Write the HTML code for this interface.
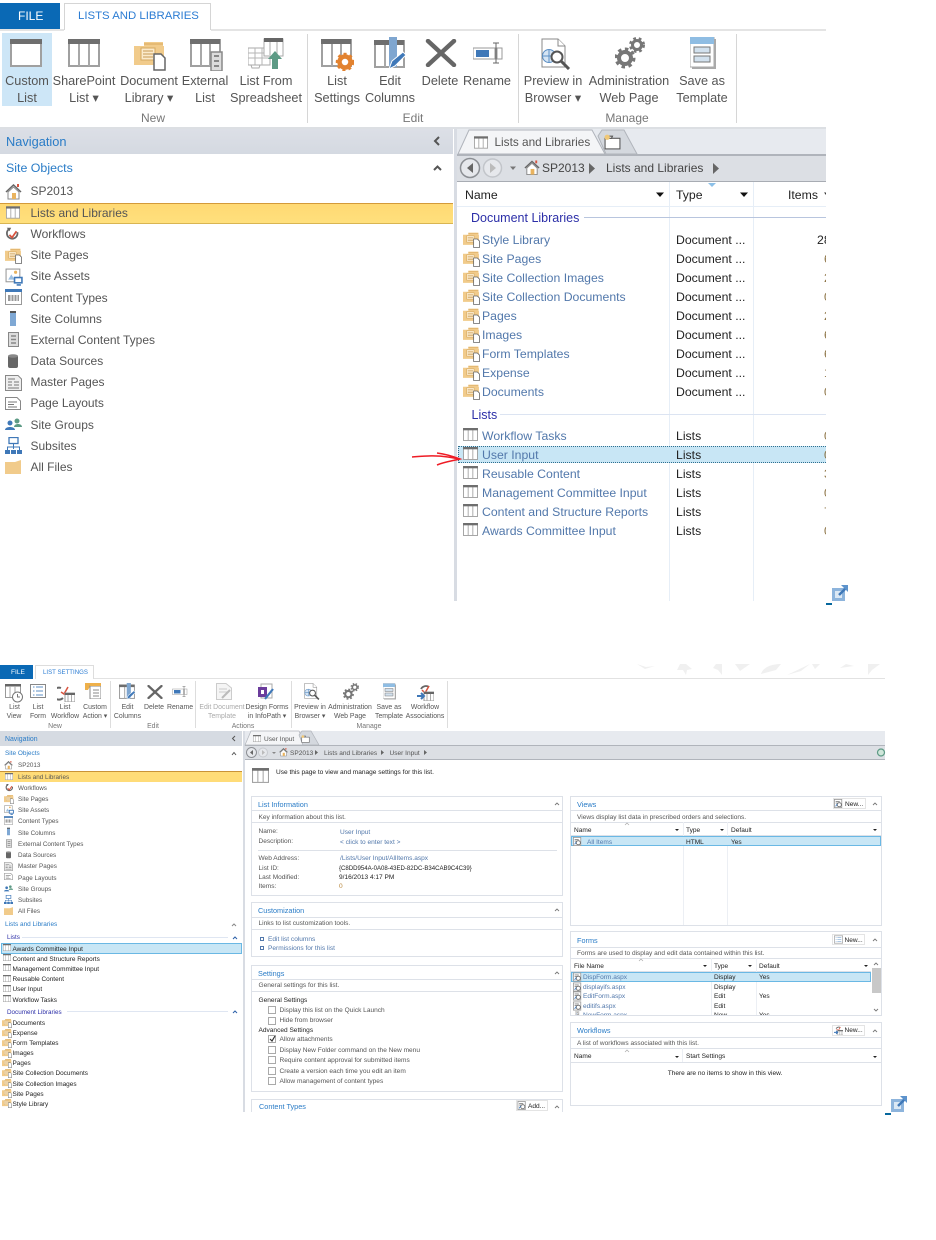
<!DOCTYPE html>
<html><head><meta charset="utf-8"><style>
html,body{margin:0;padding:0;background:#fff;width:936px;height:1240px;overflow:hidden}
body{position:relative;font-family:"Liberation Sans",sans-serif}
div,span.a{position:absolute}
.t{position:absolute;white-space:nowrap;line-height:16px;margin-top:-8px;color:#555}
.c{transform:translateX(-50%)}
#A .t{font-size:12px}
#A .lk,#A .dk{font-size:12.25px}
#B .t{font-size:6.55px;margin-top:-7px}
#B .bl{font-size:7.3px}
#B .rb .t{font-size:6.9px}
#B .nv .t{font-size:6.3px}
#B .nv .dk{font-size:6.45px}
#A .r{font-size:12.7px;color:#555}
.bl{color:#2a7cc7!important}
.lk{color:#5278ab!important}
.dk{color:#222!important}
.g{color:#777!important}
.hd{color:#2c2fa8!important}
.lt{color:#aaa!important}
.p{background:#fff;border:1px solid #dde1e8;box-sizing:border-box}
.l{background:#dde1e8;height:1px}
svg{position:absolute;left:0;top:0}
#A,#B{left:0;top:0;width:936px;height:1240px}
#B{filter:blur(.35px)}
#A{filter:blur(.3px)}
.rb,.nv{left:0;top:0}
.clip{overflow:hidden}
.cb{width:6px;height:6px;border:1px solid #aaa;background:#fff}
</style></head><body>
<svg width="0" height="0" style="position:absolute"><defs>
<symbol id="tb0" viewBox="0 0 32 28"><rect x="1" y="1" width="30" height="26" fill="#fff" stroke="#a0a0a0" stroke-width="2"/><rect width="32" height="5" fill="#6e6e6e"/></symbol>
<symbol id="tb" viewBox="0 0 32 28"><rect x="1" y="1" width="30" height="26" fill="#fff" stroke="#a0a0a0" stroke-width="2"/><path d="M11 4V27M21 4V27" stroke="#a8a8a8" stroke-width="2"/><rect width="32" height="5" fill="#6e6e6e"/></symbol>
<symbol id="lib" viewBox="0 0 32 32"><path d="M0 7H10V3H29V7H30V26H0Z" fill="#f1cb8b"/><path d="M10 5H29" stroke="#d9a85c"/><rect x="7" y="9" width="14" height="12" fill="#fbeacb" stroke="#d4a860"/><path d="M9 12H19M9 15H19M9 18H19" stroke="#c79a55"/><path d="M20 15H27L31 19V31H20Z" fill="#fff" stroke="#666" stroke-width="1.5"/></symbol>
<symbol id="ext" viewBox="0 0 33 32"><rect x="1" y="1" width="29" height="26" fill="#fff" stroke="#a0a0a0" stroke-width="2"/><path d="M11 4V27M20 4V27" stroke="#a8a8a8" stroke-width="2"/><rect width="30" height="5" fill="#6e6e6e"/><rect x="21" y="13" width="11" height="19" fill="#ddd" stroke="#888" stroke-width="1.5"/><path d="M24 17H29M24 22H29M24 27H29" stroke="#888" stroke-width="2"/></symbol>
<symbol id="ss" viewBox="0 0 36 32"><path d="M0 10H22V27H0Z" fill="#fff" stroke="#aaa"/><path d="M0 15H22M0 20H22M7 10V27M14 10V27" stroke="#b5b5b5"/><path d="M3 27H12L11 30H4Z" fill="#fff" stroke="#aaa"/><rect x="16" y="1" width="19" height="17" fill="#fff" stroke="#aaa"/><rect x="16" width="19" height="4" fill="#666"/><path d="M22 4V17M29 4V17" stroke="#aaa"/><path d="M24 31V21H20L27 13L34 21H30V31Z" fill="#5d9a85"/></symbol>
<symbol id="lset" viewBox="0 0 33 32"><rect x="1" y="1" width="29" height="26" fill="#fff" stroke="#a0a0a0" stroke-width="2"/><path d="M11 4V27M20 4V27" stroke="#a8a8a8" stroke-width="2"/><rect width="30" height="5" fill="#6e6e6e"/><circle cx="24" cy="23" r="5.5" fill="#fff" stroke="#e2822f" stroke-width="4.5"/><circle cx="24" cy="23" r="8" fill="none" stroke="#e2822f" stroke-width="2.5" stroke-dasharray="3 3"/></symbol>
<symbol id="ecol" viewBox="0 0 33 33"><rect x="1" y="4" width="29" height="26" fill="#fff" stroke="#a0a0a0" stroke-width="2"/><path d="M11 7V30" stroke="#a8a8a8" stroke-width="2"/><rect y="3" width="30" height="5" fill="#6e6e6e"/><rect x="15" width="8" height="30" fill="#7fa6d0"/><path d="M15 32L18 24L29 15L32 18L21 29Z" fill="#3f78b8" stroke="#fff"/></symbol>
<symbol id="x" viewBox="0 0 32 28"><path d="M3 2L29 26M29 2L3 26" stroke="#666" stroke-width="4.5" stroke-linecap="round"/></symbol>
<symbol id="ren" viewBox="0 0 30 22"><rect x="0" y="6" width="22" height="11" fill="#fff" stroke="#999"/><rect x="3" y="8" width="13" height="7" fill="#3f78b8"/><rect x="24" y="6" width="5" height="11" fill="#fff" stroke="#999"/><path d="M20 1H26M20 21H26M23 1V21" stroke="#666" fill="none"/></symbol>
<symbol id="prev" viewBox="0 0 30 32"><path d="M1 1H17L24 8V29H1Z" fill="#fff" stroke="#888"/><path d="M17 1V8H24" fill="#fff" stroke="#888"/><circle cx="8" cy="18" r="6.5" fill="#d5e4f3" stroke="#5c8fc4"/><path d="M2 18H14M8 12V24" stroke="#5c8fc4"/><circle cx="16" cy="19" r="5.5" fill="#fff" stroke="#555" stroke-width="2"/><path d="M20 23L28 31" stroke="#555" stroke-width="3"/></symbol>
<symbol id="adm" viewBox="0 0 30 32"><circle cx="10" cy="21" r="6" fill="#fff" stroke="#777" stroke-width="4"/><circle cx="10" cy="21" r="9" fill="none" stroke="#777" stroke-width="3" stroke-dasharray="3.5 3.5"/><circle cx="22" cy="8" r="4.5" fill="#fff" stroke="#777" stroke-width="3"/><circle cx="22" cy="8" r="6.8" fill="none" stroke="#777" stroke-width="2.4" stroke-dasharray="2.8 2.8"/></symbol>
<symbol id="tmpl" viewBox="0 0 26 32"><rect x="2" y="2" width="24" height="30" fill="#aaa"/><rect x="0" y="0" width="24" height="30" fill="#fff" stroke="#aaa"/><rect width="24" height="7" fill="#8fbde3"/><rect x="4" y="10" width="16" height="6" fill="#d2e1ee" stroke="#777"/><rect x="4" y="19" width="16" height="6" fill="#d2e1ee" stroke="#777"/></symbol>
<symbol id="home" viewBox="0 0 17 16"><path d="M1 8L8.500 1L16 8" fill="none" stroke="#666" stroke-width="1.500"/><path d="M3 8V15H14V8L8.500 3Z" fill="#fff" stroke="#888"/><rect x="7" y="9" width="4" height="6" fill="#e9b35f"/><rect x="12" y="0" width="2" height="3" fill="#d9543f"/></symbol>
<symbol id="wf" viewBox="0 0 17 17"><path d="M4 4A6 6 0 1 0 14 7" fill="none" stroke="#666" stroke-width="2"/><path d="M2 2L7 2L5 6Z" fill="#666"/><path d="M5 10L8 13L13 6" fill="none" stroke="#d9543f" stroke-width="2"/></symbol>
<symbol id="ast" viewBox="0 0 17 17"><rect x="1" y="1" width="13" height="12" fill="#fff" stroke="#999"/><path d="M3 11L6 6L9 11Z" fill="#9dbfe0"/><circle cx="10" cy="4" r="1.500" fill="#e9b35f"/><rect x="9" y="9" width="7" height="5" fill="#fff" stroke="#3f78b8" stroke-width="1.500"/><path d="M11 16H15" stroke="#3f78b8" stroke-width="1.500"/></symbol>
<symbol id="ct" viewBox="0 0 17 16"><rect x=".5" y=".5" width="16" height="15" fill="#fff" stroke="#999"/><rect width="17" height="3" fill="#3f78b8"/><rect x="3" y="6" width="11" height="6" fill="#999"/><path d="M6 6V12M9 6V12M12 6V12" stroke="#fff"/></symbol>
<symbol id="col" viewBox="0 0 6 15"><rect width="6" height="15" fill="#7fa8d4"/><rect width="6" height="2" fill="#555"/></symbol>
<symbol id="ect" viewBox="0 0 11 15"><rect x=".5" y=".5" width="10" height="14" fill="#ddd" stroke="#888"/><path d="M3 4H8M3 7.500H8M3 11H8" stroke="#888" stroke-width="1.400"/></symbol>
<symbol id="ds" viewBox="0 0 10 15"><rect y="1" width="10" height="13" rx="2" fill="#666"/><ellipse cx="5" cy="2" rx="5" ry="1.800" fill="#888"/></symbol>
<symbol id="mp" viewBox="0 0 17 16"><path d="M.5.500H13L16.500 4V15.500H.5Z" fill="#eee" stroke="#888"/><path d="M3 4H10M3 7H7M3 10H7M9 7H14M9 10H14M3 13H14" stroke="#777"/></symbol>
<symbol id="pl" viewBox="0 0 16 13"><path d="M.5.500H12L15.500 4V12.500H.5Z" fill="#fff" stroke="#888"/><path d="M3 5H12M3 7.500H9M3 10H12" stroke="#777"/></symbol>
<symbol id="grp" viewBox="0 0 17 13"><circle cx="5" cy="5" r="2.500" fill="#3f78b8"/><path d="M0 12C0 8 10 8 10 12Z" fill="#3f78b8"/><circle cx="12" cy="3" r="2.500" fill="#5d9a85"/><path d="M9 9C9 5 17 5 17 9Z" fill="#5d9a85"/></symbol>
<symbol id="sub" viewBox="0 0 17 17"><rect x="4" y=".5" width="9" height="6" fill="#fff" stroke="#3f78b8" stroke-width="1.300"/><path d="M8.500 7V12M2.500 13V10H14.500V13" fill="none" stroke="#3f78b8"/><rect y="13" width="5" height="4" fill="#3f78b8"/><rect x="6" y="13" width="5" height="4" fill="#3f78b8"/><rect x="12" y="13" width="5" height="4" fill="#3f78b8"/></symbol>
<symbol id="fol" viewBox="0 0 16 14"><path d="M0 2H10L16 0V14H0Z" fill="#f1cb8b"/></symbol>
<symbol id="lv" viewBox="0 0 18 19"><rect x=".5" y=".5" width="15" height="13" fill="#fff" stroke="#999"/><rect width="16" height="2.500" fill="#666"/><path d="M5 2V13M10 2V13" stroke="#aaa"/><circle cx="12.500" cy="13" r="5" fill="#fff" stroke="#777"/><path d="M12.500 10V13H15" stroke="#777" fill="none"/></symbol>
<symbol id="lf" viewBox="0 0 16 14"><rect x=".5" y=".5" width="15" height="13" fill="#fff" stroke="#888"/><path d="M3 3H4.500M6 3H13M3 7H4.500M6 7H13M3 11H4.500M6 11H13" stroke="#5c8fc4"/></symbol>
<symbol id="lw" viewBox="0 0 18 18"><path d="M4 4A6 6 0 1 0 6 14" fill="none" stroke="#666" stroke-width="2"/><path d="M4 8L7 10L11 3" fill="none" stroke="#d9543f" stroke-width="1.500"/><rect x="8" y="9" width="10" height="9" fill="#fff" stroke="#999"/><rect x="8" y="9" width="10" height="2" fill="#666"/><path d="M11 11V18M14.500 11V18" stroke="#aaa"/></symbol>
<symbol id="ca" viewBox="0 0 16 16"><path d="M0 0H7L3 7H0Z" fill="#eeb04a"/><rect x="5" y="3" width="11" height="13" fill="#fff" stroke="#888"/><rect x="5" width="11" height="3" fill="#eeb04a"/><path d="M8 7H14M8 10H14M8 13H14" stroke="#888"/></symbol>
<symbol id="dt" viewBox="0 0 16 17"><path d="M.5.500H10L15.500 5V16.500H.5Z" fill="#f5f5f5" stroke="#ccc"/><path d="M3 6H11M3 9H11" stroke="#ccc"/><path d="M6 15L14 7" stroke="#bbb" stroke-width="2"/></symbol>
<symbol id="dfi" viewBox="0 0 17 17"><rect x="3" y="1" width="11" height="14" fill="#fff" stroke="#aaa"/><rect y="4" width="9" height="10" fill="#6b3c9c"/><rect x="3" y="7" width="3" height="4" fill="#fff"/><path d="M7 16L15 6" stroke="#3f78b8" stroke-width="2.200"/></symbol>
<symbol id="wa" viewBox="0 0 17 17"><path d="M4 5A5.500 5.500 0 0 1 12 3" fill="none" stroke="#666" stroke-width="1.800"/><path d="M5 6L8 9L12 2" fill="none" stroke="#d9543f" stroke-width="1.500"/><rect x="7" y="8" width="10" height="9" fill="#fff" stroke="#999"/><rect x="7" y="8" width="10" height="2" fill="#666"/><path d="M10 10V17M13.500 10V17" stroke="#aaa"/><path d="M0 12H6M4 9L7 12L4 15" fill="none" stroke="#3f78b8" stroke-width="2"/></symbol>
<symbol id="ftab" viewBox="0 0 16 15"><rect x="1" y="4" width="14" height="10" fill="#fff" stroke="#555"/><path d="M1 4H7L8 2H2Z" fill="#fff" stroke="#555"/><circle cx="3" cy="3" r="2.500" fill="#f0c878"/></symbol>
<symbol id="pop" viewBox="0 0 16 16"><rect y="3" width="13" height="13" fill="#8db4dc"/><rect x="3" y="6" width="7" height="7" fill="#dbe8f4"/><path d="M7 10L14 3" stroke="#3f78b8" stroke-width="2.500"/><path d="M9 0H16V7Z" fill="#5d93cc"/></symbol>
<symbol id="frm" viewBox="0 0 11 11"><rect x=".5" y=".5" width="9" height="10" fill="#fff" stroke="#999"/><path d="M2 3H7M2 5H5" stroke="#888"/><circle cx="6.500" cy="7" r="2.500" fill="none" stroke="#666"/><path d="M2 9L4 6" stroke="#3f78b8"/></symbol>
</defs></svg>

<!-- ================= TOP SCREENSHOT ================= -->
<div id="A">
<div style="left:0;top:3px;width:60px;height:26px;background:#0a69b5"></div>
<div class="t" style="left:18px;top:16px;color:#fff;font-size:12px">FILE</div>
<div style="left:64px;top:3px;width:147px;height:27px;box-sizing:border-box;border:1px solid #d5d5d5;border-bottom:0;background:#fff"></div>
<div class="t" style="left:78px;top:16px;color:#2b7cd3;font-size:11.4px">LISTS AND LIBRARIES</div>
<div style="left:0;top:29px;width:64px;height:2px;background:#e4e4e4"></div>
<div style="left:211px;top:29px;width:615px;height:2px;background:#e4e4e4"></div>
<div style="left:2px;top:33px;width:50px;height:73px;background:#cde6f7"></div>
<div style="left:307px;top:34px;width:1px;height:89px;background:#d6d6d6"></div>
<div style="left:518px;top:34px;width:1px;height:89px;background:#d6d6d6"></div>
<div style="left:736px;top:34px;width:1px;height:89px;background:#d6d6d6"></div>
<div style="left:0;top:127px;width:826px;height:2px;background:#dcdfe3"></div>

<div class="t c r" style="left:27px;top:81px">Custom</div><div class="t c r" style="left:27px;top:98px">List</div>
<div class="t c r" style="left:84px;top:81px">SharePoint</div><div class="t c r" style="left:84px;top:98px">List ▾</div>
<div class="t c r" style="left:149px;top:81px">Document</div><div class="t c r" style="left:149px;top:98px">Library ▾</div>
<div class="t c r" style="left:205px;top:81px">External</div><div class="t c r" style="left:205px;top:98px">List</div>
<div class="t c r" style="left:266px;top:81px">List From</div><div class="t c r" style="left:266px;top:98px">Spreadsheet</div>
<div class="t c g" style="left:153px;top:118px">New</div>
<div class="t c r" style="left:337px;top:81px">List</div><div class="t c r" style="left:337px;top:98px">Settings</div>
<div class="t c r" style="left:390px;top:81px">Edit</div><div class="t c r" style="left:390px;top:98px">Columns</div>
<div class="t c r" style="left:440px;top:81px">Delete</div>
<div class="t c r" style="left:487px;top:81px">Rename</div>
<div class="t c g" style="left:413px;top:118px">Edit</div>
<div class="t c r" style="left:553px;top:81px">Preview in</div><div class="t c r" style="left:553px;top:98px">Browser ▾</div>
<div class="t c r" style="left:629px;top:81px">Administration</div><div class="t c r" style="left:629px;top:98px">Web Page</div>
<div class="t c r" style="left:702px;top:81px">Save as</div><div class="t c r" style="left:702px;top:98px">Template</div>
<div class="t c g" style="left:627px;top:118px">Manage</div>

<!-- nav -->
<div style="left:0;top:129px;width:453px;height:25px;background:linear-gradient(#dcdfe6,#d4d9e1)"></div>
<div class="t" style="left:6px;top:141.500px;color:#2a7cc7;font-size:12.8px">Navigation</div>
<div class="t" style="left:6px;top:168px;color:#2a7cc7;font-size:12.4px">Site Objects</div>
<div style="left:0;top:203px;width:453px;height:21px;box-sizing:border-box;border-top:1px solid #d39a3a;border-bottom:1px solid #d9b552;background:linear-gradient(#ffd973,#ffe07d)"></div>
<div class="t" style="left:30.500px;top:191px">SP2013</div>
<div class="t" style="left:30.500px;top:212.500px;color:#555">Lists and Libraries</div>
<div class="t" style="left:30.500px;top:234px">Workflows</div>
<div class="t" style="left:30.500px;top:255px">Site Pages</div>
<div class="t" style="left:30.500px;top:276px">Site Assets</div>
<div class="t" style="left:30.500px;top:297.500px">Content Types</div>
<div class="t" style="left:30.500px;top:318.500px">Site Columns</div>
<div class="t" style="left:30.500px;top:339.500px">External Content Types</div>
<div class="t" style="left:30.500px;top:361px">Data Sources</div>
<div class="t" style="left:30.500px;top:382px">Master Pages</div>
<div class="t" style="left:30.500px;top:403px">Page Layouts</div>
<div class="t" style="left:30.500px;top:424.500px">Site Groups</div>
<div class="t" style="left:30.500px;top:445.500px">Subsites</div>
<div class="t" style="left:30.500px;top:466.500px">All Files</div>

<!-- right pane -->
<div style="left:454px;top:129px;width:3px;height:472px;background:#d8dce3"></div>
<div style="left:457px;top:129px;width:369px;height:26px;background:#e7eaef"></div>
<div style="left:457px;top:154px;width:369px;height:2px;background:#b0b4bb"></div>
<div style="left:457px;top:156px;width:369px;height:25px;background:#dcdfe4"></div>
<div style="left:457px;top:181px;width:369px;height:1px;background:#a8acb3"></div>
<div style="left:669px;top:182px;width:1px;height:419px;background:#e6eef7"></div>
<div style="left:753px;top:182px;width:1px;height:419px;background:#e6eef7"></div>
<div style="left:457px;top:206px;width:369px;height:1px;background:#e6eef7"></div>
<div class="t" style="left:542px;top:168px;color:#444;font-size:12px">SP2013</div>
<div class="t" style="left:606px;top:168px;color:#444;font-size:12px">Lists and Libraries</div>
<div class="t dk" style="left:465px;top:195px">Name</div>
<div class="t dk" style="left:676px;top:195px">Type</div>
<div class="t dk" style="left:788px;top:195px">Items</div>
<div class="t hd" style="left:471px;top:217.500px;font-size:12.5px">Document Libraries</div>
<div style="left:584px;top:217px;width:242px;height:1px;background:#b8c5de"></div>
<div class="t hd" style="left:471.500px;top:414.500px;font-size:12.5px">Lists</div>
<div style="left:500px;top:414px;width:326px;height:1px;background:#dce4f2"></div>
<div style="left:458px;top:446px;width:368px;height:17px;box-sizing:border-box;background:#c8e6f5;border-top:1px dotted #2f6f8f;border-bottom:1px dotted #2f6f8f;border-left:1px dotted #2f6f8f"></div>

<div class="t lk" style="left:482px;top:239.500px">Style Library</div><div class="t dk" style="left:676px;top:239.500px">Document ...</div>
<div class="t lk" style="left:482px;top:258.500px">Site Pages</div><div class="t dk" style="left:676px;top:258.500px">Document ...</div>
<div class="t lk" style="left:482px;top:277.500px">Site Collection Images</div><div class="t dk" style="left:676px;top:277.500px">Document ...</div>
<div class="t lk" style="left:482px;top:296.500px">Site Collection Documents</div><div class="t dk" style="left:676px;top:296.500px">Document ...</div>
<div class="t lk" style="left:482px;top:315.500px">Pages</div><div class="t dk" style="left:676px;top:315.500px">Document ...</div>
<div class="t lk" style="left:482px;top:334.500px">Images</div><div class="t dk" style="left:676px;top:334.500px">Document ...</div>
<div class="t lk" style="left:482px;top:353.500px">Form Templates</div><div class="t dk" style="left:676px;top:353.500px">Document ...</div>
<div class="t lk" style="left:482px;top:372.500px">Expense</div><div class="t dk" style="left:676px;top:372.500px">Document ...</div>
<div class="t lk" style="left:482px;top:391.500px">Documents</div><div class="t dk" style="left:676px;top:391.500px">Document ...</div>
<div class="t lk" style="left:482px;top:436px">Workflow Tasks</div><div class="t dk" style="left:676px;top:436px">Lists</div>
<div class="t lk" style="left:482px;top:455px">User Input</div><div class="t dk" style="left:676px;top:455px">Lists</div>
<div class="t lk" style="left:482px;top:474px">Reusable Content</div><div class="t dk" style="left:676px;top:474px">Lists</div>
<div class="t lk" style="left:482px;top:493px">Management Committee Input</div><div class="t dk" style="left:676px;top:493px">Lists</div>
<div class="t lk" style="left:482px;top:512px">Content and Structure Reports</div><div class="t dk" style="left:676px;top:512px">Lists</div>
<div class="t lk" style="left:482px;top:531px">Awards Committee Input</div><div class="t dk" style="left:676px;top:531px">Lists</div>

<div class="clip" style="left:810px;top:0;width:16px;height:601px">
<div class="t dk" style="left:7px;top:239.500px">28</div><div class="t" style="left:14px;top:258.500px;color:#8a7040">6</div><div class="t" style="left:14px;top:277.500px;color:#8a7040">2</div><div class="t" style="left:14px;top:296.500px;color:#8a7040">0</div><div class="t" style="left:14px;top:315.500px;color:#8a7040">2</div><div class="t" style="left:14px;top:334.500px;color:#8a7040">6</div><div class="t" style="left:14px;top:353.500px;color:#8a7040">6</div><div class="t" style="left:14px;top:372.500px;color:#8a7040">1</div><div class="t" style="left:14px;top:391.500px;color:#8a7040">0</div><div class="t" style="left:14px;top:436px;color:#8a7040">0</div><div class="t" style="left:14px;top:455px;color:#8a7040">0</div><div class="t" style="left:14px;top:474px;color:#8a7040">3</div><div class="t" style="left:14px;top:493px;color:#8a7040">0</div><div class="t" style="left:14px;top:512px;color:#8a7040">7</div><div class="t" style="left:14px;top:531px;color:#8a7040">0</div>
</div>
<div style="left:826px;top:603px;width:6px;height:2px;background:#06679d"></div>

<svg width="936" height="620" style="overflow:visible">
<use href="#tb0" x="10" y="39" width="32" height="28"/>
<use href="#tb" x="68" y="39" width="32" height="28"/>
<use href="#lib" x="134" y="39" width="32" height="32"/>
<use href="#ext" x="190" y="39" width="33" height="32"/>
<use href="#ss" x="248" y="38" width="36" height="32"/>
<use href="#lset" x="321" y="39" width="33" height="32"/>
<use href="#ecol" x="374" y="37" width="33" height="33"/>
<use href="#x" x="425" y="39" width="32" height="28"/>
<use href="#ren" x="473" y="42" width="30" height="22"/>
<use href="#prev" x="541" y="38" width="30" height="32"/>
<use href="#adm" x="615" y="37" width="30" height="32"/>
<use href="#tmpl" x="690" y="37" width="26" height="32"/>
<path d="M439 137L435 141L439 145M434 170L437.500 166.500L441 170" fill="none" stroke="#555" stroke-width="2"/>
<use href="#home" x="5" y="184" width="17" height="16"/>
<use href="#tb" x="6" y="206" width="14" height="13"/>
<use href="#wf" x="5" y="226" width="15" height="15"/>
<use href="#lib" x="5" y="247" width="17" height="17"/>
<use href="#ast" x="5" y="268" width="18" height="18"/>
<use href="#ct" x="5" y="289" width="17" height="16"/>
<use href="#col" x="10" y="311" width="6" height="15"/>
<use href="#ect" x="8" y="332" width="11" height="15"/>
<use href="#ds" x="8" y="354" width="10" height="15"/>
<use href="#mp" x="5" y="375" width="17" height="16"/>
<use href="#pl" x="5" y="397" width="16" height="13"/>
<use href="#grp" x="5" y="418" width="17" height="13"/>
<use href="#sub" x="5" y="437" width="17" height="17"/>
<use href="#fol" x="5" y="460" width="16" height="14"/>
<!-- tabs -->
<path d="M458 154L469 130H592L605 154Z" fill="#f4f5f7" stroke="#b0b4bb"/>
<path d="M598 136L602 130H624L637 154H606Z" fill="#d4d8de" stroke="#b0b4bb"/>
<use href="#tb" x="474" y="136" width="14" height="13"/>
<use href="#ftab" x="604" y="134" width="17" height="16"/>
<!-- breadcrumb -->
<circle cx="470" cy="168" r="9.500" fill="#e6e8ec" stroke="#8c8f94" stroke-width="1.500"/><path d="M473 163V173L467 168Z" fill="#666"/>
<circle cx="492.500" cy="168" r="9" fill="#e6e8ec" stroke="#c2c5ca" stroke-width="1.500"/><path d="M490 163V173L496 168Z" fill="#bbb"/>
<path d="M510 166.500H516L513 170Z" fill="#777"/>
<use href="#home" x="524" y="160" width="16" height="16"/>
<path d="M589 163V174L595 168.500Z" fill="#666"/><path d="M713 163V174L719 168.500Z" fill="#666"/>
<path d="M656 192.500H664L660 197ZM740 192.500H748L744 197Z" fill="#111"/><path d="M824 192.500H826V195Z" fill="#333"/>
<path d="M708 183H716L712 187Z" fill="#8cc0e8"/>
<!-- rows -->
<use href="#lib" x="463" y="231" width="17" height="17"/><use href="#lib" x="463" y="250" width="17" height="17"/><use href="#lib" x="463" y="269" width="17" height="17"/><use href="#lib" x="463" y="288" width="17" height="17"/><use href="#lib" x="463" y="307" width="17" height="17"/><use href="#lib" x="463" y="326" width="17" height="17"/><use href="#lib" x="463" y="345" width="17" height="17"/><use href="#lib" x="463" y="364" width="17" height="17"/><use href="#lib" x="463" y="383" width="17" height="17"/>
<use href="#tb" x="463" y="428" width="15" height="13"/><use href="#tb" x="463" y="447" width="15" height="13"/><use href="#tb" x="463" y="466" width="15" height="13"/><use href="#tb" x="463" y="485" width="15" height="13"/><use href="#tb" x="463" y="504" width="15" height="13"/><use href="#tb" x="463" y="523" width="15" height="13"/>
<!-- arrow -->
<path d="M412 457C425 456 435 455 448 457L460 459M437 453C445 454 452 456 460 459C452 461 444 462 437 465" fill="none" stroke="#ee1c25" stroke-width="1.500"/>
<use href="#pop" x="832" y="585" width="16" height="16"/>
</svg>
<div class="t" style="left:494.500px;top:141.500px;font-size:11.8px">Lists and Libraries</div>
</div>

<!-- ================= BOTTOM SCREENSHOT ================= -->
<div id="B">
<div style="left:0;top:665px;width:33px;height:14px;background:#0a69b5"></div>
<div class="t" style="left:11px;top:671.500px;color:#fff">FILE</div>
<div style="left:35px;top:665px;width:59px;height:14px;box-sizing:border-box;border:1px solid #ddd;border-bottom:0"></div>
<div class="t" style="left:43px;top:671.500px;color:#2b7cd3;font-size:6.1px">LIST SETTINGS</div>
<div style="left:94px;top:678px;width:791px;height:1px;background:#e2e2e2"></div>
<div style="left:110px;top:681px;width:1px;height:47px;background:#ddd"></div>
<div style="left:195px;top:681px;width:1px;height:47px;background:#ddd"></div>
<div style="left:291px;top:681px;width:1px;height:47px;background:#ddd"></div>
<div style="left:447px;top:681px;width:1px;height:47px;background:#ddd"></div>

<div class="rb">
<div class="t c" style="left:14.500px;top:706.500px">List</div><div class="t c" style="left:14px;top:715.500px">View</div>
<div class="t c" style="left:38px;top:706.500px">List</div><div class="t c" style="left:38px;top:715.500px">Form</div>
<div class="t c" style="left:65px;top:706.500px">List</div><div class="t c" style="left:65px;top:715.500px">Workflow</div>
<div class="t c" style="left:95px;top:706.500px">Custom</div><div class="t c" style="left:95px;top:715.500px">Action ▾</div>
<div class="t c g" style="left:55px;top:726px">New</div>
<div class="t c" style="left:127.500px;top:706.500px">Edit</div><div class="t c" style="left:127.500px;top:715.500px">Columns</div>
<div class="t c" style="left:154px;top:706.500px">Delete</div>
<div class="t c" style="left:180px;top:706.500px">Rename</div>
<div class="t c g" style="left:153px;top:726px">Edit</div>
<div class="t c lt" style="left:222px;top:706.500px">Edit Document</div><div class="t c lt" style="left:222px;top:715.500px">Template</div>
<div class="t c" style="left:267px;top:706.500px">Design Forms</div><div class="t c" style="left:267px;top:715.500px">in InfoPath ▾</div>
<div class="t c g" style="left:243px;top:726px">Actions</div>
<div class="t c" style="left:310px;top:706.500px">Preview in</div><div class="t c" style="left:310px;top:715.500px">Browser ▾</div>
<div class="t c" style="left:350px;top:706.500px">Administration</div><div class="t c" style="left:350px;top:715.500px">Web Page</div>
<div class="t c" style="left:389px;top:706.500px">Save as</div><div class="t c" style="left:389px;top:715.500px">Template</div>
<div class="t c" style="left:425px;top:706.500px">Workflow</div><div class="t c" style="left:425px;top:715.500px">Associations</div>
<div class="t c g" style="left:369px;top:726px">Manage</div>
</div>

<!-- nav -->
<div style="left:0;top:731px;width:242px;height:15px;background:#d6dbe2"></div>
<div style="left:0;top:771px;width:242px;height:11px;box-sizing:border-box;border-top:1px solid #c99338;background:#ffdc78"></div>
<div style="left:22px;top:936.500px;width:206px;height:1px;background:#dfe6f2"></div>
<div style="left:1px;top:943px;width:241px;height:10.500px;box-sizing:border-box;background:#c8e6f5;border:1px solid #6ab8e4"></div>
<div style="left:67px;top:1011px;width:161px;height:1px;background:#dfe6f2"></div>
<div class="nv">
<div class="t bl" style="left:5px;top:738.500px;font-size:6.9px">Navigation</div>
<div class="t bl" style="left:5px;top:752.500px;font-size:6.45px">Site Objects</div>
<div class="t" style="left:18px;top:765px">SP2013</div>
<div class="t" style="left:18px;top:776.500px">Lists and Libraries</div>
<div class="t" style="left:18px;top:787.500px">Workflows</div>
<div class="t" style="left:18px;top:798.500px">Site Pages</div>
<div class="t" style="left:18px;top:810px">Site Assets</div>
<div class="t" style="left:18px;top:821px">Content Types</div>
<div class="t" style="left:18px;top:832.500px">Site Columns</div>
<div class="t" style="left:18px;top:843.500px">External Content Types</div>
<div class="t" style="left:18px;top:855px">Data Sources</div>
<div class="t" style="left:18px;top:866px">Master Pages</div>
<div class="t" style="left:18px;top:877.500px">Page Layouts</div>
<div class="t" style="left:18px;top:888.500px">Site Groups</div>
<div class="t" style="left:18px;top:900px">Subsites</div>
<div class="t" style="left:18px;top:911px">All Files</div>
<div class="t bl" style="left:5px;top:924px;font-size:6.45px">Lists and Libraries</div>
<div class="t hd" style="left:7px;top:937px">Lists</div>
<div class="t dk" style="left:12.500px;top:948.500px">Awards Committee Input</div>
<div class="t dk" style="left:12.500px;top:958.500px">Content and Structure Reports</div>
<div class="t dk" style="left:12.500px;top:968.500px">Management Committee Input</div>
<div class="t dk" style="left:12.500px;top:979px">Reusable Content</div>
<div class="t dk" style="left:12.500px;top:989px">User Input</div>
<div class="t dk" style="left:12.500px;top:999.500px">Workflow Tasks</div>
<div class="t hd" style="left:7px;top:1011.500px">Document Libraries</div>
<div class="t dk" style="left:12.500px;top:1022.500px">Documents</div>
<div class="t dk" style="left:12.500px;top:1033px">Expense</div>
<div class="t dk" style="left:12.500px;top:1043px">Form Templates</div>
<div class="t dk" style="left:12.500px;top:1053px">Images</div>
<div class="t dk" style="left:12.500px;top:1063px">Pages</div>
<div class="t dk" style="left:12.500px;top:1073px">Site Collection Documents</div>
<div class="t dk" style="left:12.500px;top:1083.500px">Site Collection Images</div>
<div class="t dk" style="left:12.500px;top:1093.500px">Site Pages</div>
<div class="t dk" style="left:12.500px;top:1103.500px">Style Library</div>
</div>

<!-- right pane frame -->
<div style="left:243px;top:731px;width:2px;height:381px;background:#d8dce3"></div>
<div style="left:245px;top:731px;width:640px;height:14px;background:#e7eaef"></div>
<div style="left:245px;top:745px;width:640px;height:1px;background:#b0b4bb"></div>
<div style="left:245px;top:746px;width:640px;height:13px;background:#dcdfe4"></div>
<div style="left:245px;top:759px;width:640px;height:1px;background:#b0b4bb"></div>
<div class="t" style="left:290px;top:752.500px">SP2013</div>
<div class="t" style="left:324px;top:752.500px">Lists and Libraries</div>
<div class="t" style="left:389.500px;top:752.500px">User Input</div>
<div class="t dk" style="left:276px;top:771.500px">Use this page to view and manage settings for this list.</div>

<!-- left panels -->
<div class="p" style="left:251px;top:796px;width:312px;height:100px"></div>
<div class="l" style="left:252px;top:810px;width:310px"></div><div class="l" style="left:252px;top:822px;width:310px"></div>
<div class="t bl" style="left:258px;top:803.500px">List Information</div>
<div class="t" style="left:258.500px;top:816.500px">Key information about this list.</div>
<div class="t" style="left:258.500px;top:831px">Name:</div><div class="t lk" style="left:340px;top:832px">User Input</div>
<div class="t" style="left:258.500px;top:841px">Description:</div><div class="t lk" style="left:340px;top:842px">&lt; click to enter text &gt;</div>
<div class="l" style="left:258px;top:850px;width:299px"></div>
<div class="t" style="left:258.500px;top:858px">Web Address:</div><div class="t lk" style="left:340px;top:858px">/Lists/User Input/AllItems.aspx</div>
<div class="t" style="left:258.500px;top:867.500px">List ID:</div><div class="t dk" style="left:339px;top:867.500px;font-size:6.05px">{C8DD954A-0A08-43ED-82DC-B34CAB9C4C39}</div>
<div class="t" style="left:258.500px;top:876.500px">Last Modified:</div><div class="t dk" style="left:339px;top:876.500px">9/16/2013 4:17 PM</div>
<div class="t" style="left:258.500px;top:885.500px">Items:</div><div class="t" style="left:339px;top:885.500px;color:#b8863b">0</div>

<div class="p" style="left:251px;top:902px;width:312px;height:55px"></div>
<div class="l" style="left:252px;top:917px;width:310px"></div><div class="l" style="left:252px;top:929px;width:310px"></div>
<div class="t bl" style="left:258px;top:910px">Customization</div>
<div class="t" style="left:258.500px;top:923px">Links to list customization tools.</div>
<div class="t lk" style="left:268px;top:938.500px">Edit list columns</div>
<div class="t lk" style="left:268px;top:947.500px">Permissions for this list</div>
<div style="left:260px;top:937px;width:2px;height:2px;border:1px solid #5278ab"></div>
<div style="left:260px;top:946px;width:2px;height:2px;border:1px solid #5278ab"></div>

<div class="p" style="left:251px;top:965px;width:312px;height:127px"></div>
<div class="l" style="left:252px;top:979px;width:310px"></div><div class="l" style="left:252px;top:991px;width:310px"></div>
<div class="t bl" style="left:258px;top:972.500px">Settings</div>
<div class="t" style="left:258.500px;top:985px">General settings for this list.</div>
<div class="t dk" style="left:258.500px;top:1000px">General Settings</div>
<div class="cb" style="left:268px;top:1006px"></div><div class="t" style="left:279.500px;top:1009.500px">Display this list on the Quick Launch</div>
<div class="cb" style="left:268px;top:1017px"></div><div class="t" style="left:279.500px;top:1020px">Hide from browser</div>
<div class="t dk" style="left:258.500px;top:1029.500px">Advanced Settings</div>
<div class="cb" style="left:268px;top:1035px"></div><div class="t" style="left:279.500px;top:1039px">Allow attachments</div>
<div class="cb" style="left:268px;top:1046px"></div><div class="t" style="left:279.500px;top:1049.500px">Display New Folder command on the New menu</div>
<div class="cb" style="left:268px;top:1056px"></div><div class="t" style="left:279.500px;top:1060px">Require content approval for submitted items</div>
<div class="cb" style="left:268px;top:1067px"></div><div class="t" style="left:279.500px;top:1070.500px">Create a version each time you edit an item</div>
<div class="cb" style="left:268px;top:1077px"></div><div class="t" style="left:279.500px;top:1081px">Allow management of content types</div>

<div class="p" style="left:251px;top:1099px;width:312px;height:13px;border-bottom:0"></div>
<div class="t bl" style="left:259px;top:1106px">Content Types</div>
<div style="left:516px;top:1100px;width:32px;height:11px;box-sizing:border-box;border:1px solid #e4e4e4"></div>
<div class="t dk" style="left:528px;top:1106px">Add...</div>

<!-- right panels: views -->
<div class="p" style="left:570px;top:796px;width:312px;height:130px"></div>
<div class="l" style="left:571px;top:810px;width:310px"></div><div class="l" style="left:571px;top:822px;width:310px"></div><div class="l" style="left:571px;top:835px;width:310px"></div>
<div style="left:683px;top:822px;width:1px;height:103px;background:#eceff4"></div><div style="left:727px;top:822px;width:1px;height:103px;background:#eceff4"></div>
<div class="t bl" style="left:577px;top:803.500px">Views</div>
<div style="left:833px;top:798px;width:33px;height:11px;box-sizing:border-box;border:1px solid #e4e4e4"></div>
<div class="t dk" style="left:845px;top:803.500px">New...</div>
<div class="t" style="left:577px;top:816.500px">Views display list data in prescribed orders and selections.</div>
<div class="t dk" style="left:574px;top:829.500px">Name</div><div class="t dk" style="left:686px;top:829.500px">Type</div><div class="t dk" style="left:731px;top:829.500px">Default</div>
<div style="left:571px;top:836px;width:310px;height:10px;box-sizing:border-box;background:#c8e6f5;border:1px solid #6ab8e4"></div>
<div class="t lk" style="left:587px;top:841.500px">All Items</div><div class="t dk" style="left:686px;top:841.500px">HTML</div><div class="t dk" style="left:731px;top:841.500px">Yes</div>

<!-- forms -->
<div class="p" style="left:570px;top:931px;width:312px;height:85px"></div>
<div class="l" style="left:571px;top:947px;width:310px"></div><div class="l" style="left:571px;top:958px;width:310px"></div><div class="l" style="left:571px;top:971px;width:300px"></div>
<div style="left:711px;top:958px;width:1px;height:57px;background:#eceff4"></div><div style="left:756px;top:958px;width:1px;height:57px;background:#eceff4"></div>
<div class="t bl" style="left:577px;top:939.500px">Forms</div>
<div style="left:832px;top:934px;width:33px;height:11px;box-sizing:border-box;border:1px solid #e4e4e4"></div>
<div class="t dk" style="left:844.500px;top:939.500px">New...</div>
<div class="t" style="left:577px;top:952.500px">Forms are used to display and edit data contained within this list.</div>
<div class="t dk" style="left:574px;top:965.500px">File Name</div><div class="t dk" style="left:714px;top:965.500px">Type</div><div class="t dk" style="left:759px;top:965.500px">Default</div>
<div style="left:571px;top:972px;width:300px;height:10px;box-sizing:border-box;background:#c8e6f5;border:1px solid #6ab8e4"></div>
<div style="left:872px;top:968px;width:9px;height:25px;background:#c8c8c8"></div>
<div class="clip" style="left:571px;top:972px;width:300px;height:43px">
<div class="t lk" style="left:12px;top:5px">DispForm.aspx</div><div class="t dk" style="left:143px;top:5px">Display</div><div class="t dk" style="left:188px;top:5px">Yes</div>
<div class="t lk" style="left:12px;top:14.500px">displayifs.aspx</div><div class="t dk" style="left:143px;top:14.500px">Display</div>
<div class="t lk" style="left:12px;top:24px">EditForm.aspx</div><div class="t dk" style="left:143px;top:24px">Edit</div><div class="t dk" style="left:188px;top:24px">Yes</div>
<div class="t lk" style="left:12px;top:33.500px">editifs.aspx</div><div class="t dk" style="left:143px;top:33.500px">Edit</div>
<div class="t lk" style="left:12px;top:43px">NewForm.aspx</div><div class="t dk" style="left:143px;top:43px">New</div><div class="t dk" style="left:188px;top:43px">Yes</div>
</div>

<!-- workflows -->
<div class="p" style="left:570px;top:1022px;width:312px;height:84px"></div>
<div class="l" style="left:571px;top:1037px;width:310px"></div><div class="l" style="left:571px;top:1048px;width:310px"></div><div class="l" style="left:571px;top:1062px;width:310px"></div>
<div style="left:682px;top:1048px;width:1px;height:14px;background:#eceff4"></div>
<div class="t bl" style="left:577px;top:1030px">Workflows</div>
<div style="left:832px;top:1025px;width:33px;height:11px;box-sizing:border-box;border:1px solid #e4e4e4"></div>
<div class="t dk" style="left:844.500px;top:1030px">New...</div>
<div class="t" style="left:577px;top:1043px">A list of workflows associated with this list.</div>
<div class="t dk" style="left:574px;top:1056px">Name</div><div class="t dk" style="left:686px;top:1056px">Start Settings</div>
<div class="t dk c" style="left:725px;top:1073px">There are no items to show in this view.</div>
<div style="left:885px;top:1113px;width:6px;height:2px;background:#06679d"></div>

<svg width="936" height="1240">
<!-- watermark leaves -->
<g fill="#f0f0f0"><path d="M637 664L646 667L655 666L645 669Z"/><path d="M680 664L686 664L692 669L687 670L686 675L683 670L677 670Z"/><path d="M716 664L722 664L722 675L718 670L713 668Z"/><path d="M735 664L750 664L740 671Z"/><path d="M761 674C763 667 772 664 781 664L776 670Z"/><path d="M787 675L810 664L801 671Z"/><path d="M812 664L820 664L815 669Z"/><path d="M846 664L854 666L840 668Z"/><path d="M868 664L880 664L872 670L868 675Z"/></g>
<use href="#lv" x="5" y="684" width="18" height="19"/>
<use href="#lf" x="30" y="684" width="16" height="14"/>
<use href="#lw" x="57" y="684" width="18" height="18"/>
<use href="#ca" x="85" y="683" width="16" height="16"/>
<use href="#ecol" x="119" y="683" width="17" height="17"/>
<use href="#x" x="147" y="685" width="16" height="14"/>
<use href="#ren" x="172" y="686" width="16" height="11"/>
<use href="#dt" x="216" y="683" width="16" height="17"/>
<use href="#dfi" x="258" y="683" width="17" height="17"/>
<use href="#prev" x="304" y="683" width="16" height="17"/>
<use href="#adm" x="343" y="683" width="16" height="17"/>
<use href="#tmpl" x="383" y="683" width="13" height="17"/>
<use href="#wa" x="417" y="684" width="17" height="17"/>
<path d="M235 736L232.500 738.500L235 741M232 755L234 752.500L236 755" fill="none" stroke="#555"/>
<path d="M232 926L234 924L236 926" fill="none" stroke="#888"/>
<path d="M233 939L235 937L237 939M233 1013L235 1011L237 1013" fill="none" stroke="#2b5fa8"/>
<use href="#home" x="4" y="761" width="9" height="8.500"/>
<use href="#tb" x="5" y="773" width="8" height="7"/>
<use href="#wf" x="5" y="783" width="9" height="9"/>
<use href="#lib" x="4" y="794" width="10" height="10"/>
<use href="#ast" x="4" y="805" width="10" height="10"/>
<use href="#ct" x="4" y="816" width="9" height="9"/>
<use href="#col" x="7" y="827" width="3" height="9"/>
<use href="#ect" x="6" y="839" width="6" height="9"/>
<use href="#ds" x="6" y="851" width="5" height="8"/>
<use href="#mp" x="4" y="862" width="9" height="9"/>
<use href="#pl" x="4" y="873" width="9" height="7"/>
<use href="#grp" x="4" y="885" width="9" height="7"/>
<use href="#sub" x="4" y="895" width="9" height="9"/>
<use href="#fol" x="4" y="907" width="9" height="8"/>
<use href="#tb" x="3" y="944" width="8" height="7"/><use href="#tb" x="3" y="954" width="8" height="7"/><use href="#tb" x="3" y="964" width="8" height="7"/><use href="#tb" x="3" y="975" width="8" height="7"/><use href="#tb" x="3" y="985" width="8" height="7"/><use href="#tb" x="3" y="995" width="8" height="7"/>
<use href="#lib" x="2" y="1018" width="10" height="10"/><use href="#lib" x="2" y="1028" width="10" height="10"/><use href="#lib" x="2" y="1038" width="10" height="10"/><use href="#lib" x="2" y="1048" width="10" height="10"/><use href="#lib" x="2" y="1058" width="10" height="10"/><use href="#lib" x="2" y="1068" width="10" height="10"/><use href="#lib" x="2" y="1078" width="10" height="10"/><use href="#lib" x="2" y="1088" width="10" height="10"/><use href="#lib" x="2" y="1098" width="10" height="10"/>
<!-- tab + breadcrumb -->
<path d="M245 745L251 731H299L305 745Z" fill="#f4f5f7" stroke="#b0b4bb" stroke-width=".7"/>
<path d="M299 735L302 731H311L319 745H303Z" fill="#d4d8de" stroke="#b0b4bb" stroke-width=".7"/>
<use href="#tb" x="253" y="735" width="8" height="7"/>
<use href="#ftab" x="301" y="735" width="9" height="8"/>
<circle cx="251.500" cy="752.500" r="5" fill="#e6e8ec" stroke="#8c8f94"/><path d="M253 750V755L250 752.500Z" fill="#666"/>
<circle cx="263" cy="752.500" r="4.500" fill="#e6e8ec" stroke="#c6c9ce"/><path d="M262 750V755L265 752.500Z" fill="#bbb"/>
<path d="M272 752H276L274 754Z" fill="#888"/>
<use href="#home" x="279" y="748" width="9" height="8.500"/>
<path d="M315 750V755L318 752.500ZM381 750V755L384 752.500ZM424 750V755L427 752.500Z" fill="#666"/>
<circle cx="881" cy="752.500" r="3.500" fill="#cfe6da" stroke="#5d9a85" stroke-width="1.200"/>
<use href="#tb" x="252" y="768" width="17" height="15"/>
<!-- panel chevrons -->
<g fill="none" stroke="#777" stroke-width=".9"><path d="M555 805L557 803L559 805M555 911L557 909L559 911M555 974L557 972L559 974M555 1108L557 1106L559 1108M873 805L875 803L877 805M873 941L875 939L877 941M873 1032L875 1030L877 1032M874 965L876 963L878 965M874 1009L876 1011L878 1009"/></g>
<path d="M270 1039L272 1041L275 1036" fill="none" stroke="#333" stroke-width="1.200"/>
<!-- button icons -->
<use href="#frm" x="834" y="799" width="9" height="9"/>
<use href="#lf" x="834" y="935" width="9" height="9"/>
<use href="#wa" x="834" y="1026" width="9" height="9"/>
<use href="#frm" x="517" y="1101" width="10" height="9"/>
<!-- table markers -->
<path d="M675 829H679L677 831ZM720 829H724L722 831ZM873 829H877L875 831ZM703 965H707L705 967ZM748 965H752L750 967ZM864 965H868L866 967ZM675 1056H679L677 1058ZM873 1056H877L875 1058Z" fill="#222"/>
<path d="M625 825L627 823L629 825M639 961L641 959L643 961M625 1052L627 1050L629 1052" fill="none" stroke="#aaa" stroke-width=".7"/>
<!-- form rows -->
<use href="#frm" x="573" y="972" width="9" height="10"/>
<use href="#frm" x="573" y="982" width="9" height="10"/>
<use href="#frm" x="573" y="991" width="9" height="10"/>
<use href="#frm" x="573" y="1001" width="9" height="10"/>
<use href="#frm" x="573" y="1011" width="9" height="4" preserveAspectRatio="xMidYMin slice"/>
<use href="#frm" x="573" y="837" width="9" height="9"/>
<use href="#pop" x="891" y="1096" width="16" height="16"/>
</svg>
<div class="t" style="left:264px;top:738.500px">User Input</div>
</div>
</body></html>
